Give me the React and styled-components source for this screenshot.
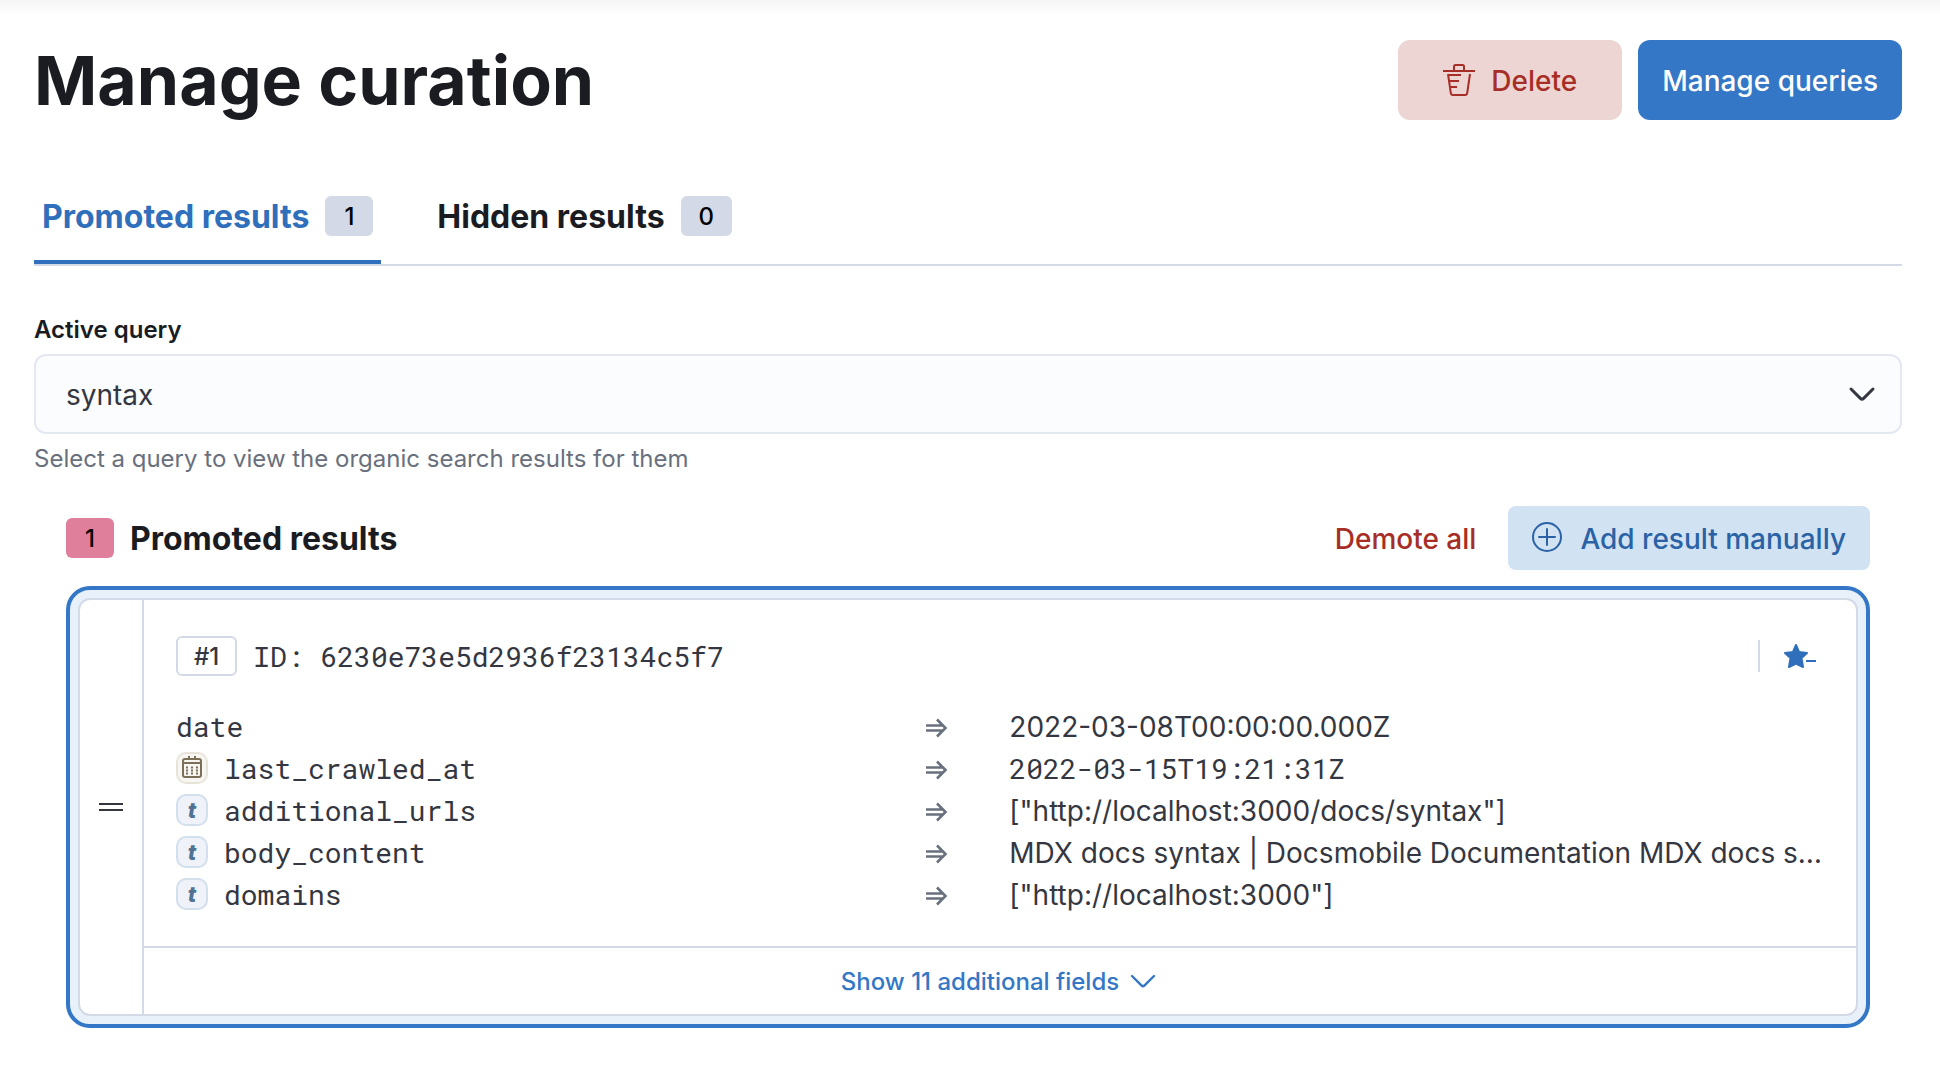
import React from "react";
import styled, { createGlobalStyle, css } from "styled-components";

const sans = `Inter, "Liberation Sans", sans-serif`;
const mono = `"Roboto Mono", "DejaVu Sans Mono", monospace`;

const color = {
  title: "#1a1c21",
  text: "#343741",
  subdued: "#69707d",
  primary: "#3377c6",
  primaryText: "#2f6fbb",
  border: "#d3d9e6",
  danger: "#a72e26",
};

const GlobalStyle = createGlobalStyle`
  *, *::before, *::after { box-sizing: border-box; }
  body {
    margin: 0;
    background: #fff;
    color: ${color.text};
    font-family: ${sans};
    font-size: 28px;
    line-height: 42px;
  }
  button, select { font-family: inherit; }
`;

const Page = styled.main`
  min-height: 100vh;
  padding: 40px 38px 44px 34px;
  background: linear-gradient(#f5f5f5, #fff) top / 100% 16px no-repeat;
`;

const Header = styled.header`
  display: flex;
  align-items: center;
  justify-content: space-between;
  gap: 16px;
`;

const PageTitle = styled.h1`
  margin: 0;
  color: ${color.title};
  font-size: 68px;
  font-weight: 700;
  line-height: 80px;
`;

const Actions = styled.div`
  display: flex;
  align-items: center;
  gap: ${(p) => p.$gap || 16}px;
`;

const fills = {
  danger: css`background: #edd5d3; color: ${color.danger};`,
  primary: css`background: ${color.primary}; color: #fff;`,
  soft: css`background: #d1e2f2; color: #2a62a5;`,
};

const Label = styled.span`
  padding-top: 2px;
`;

const Button = styled.button`
  display: flex;
  align-items: center;
  justify-content: center;
  gap: 16px;
  height: ${(p) => (p.$small ? 64 : 80)}px;
  min-width: ${(p) => (p.$small ? 0 : 224)}px;
  padding: 0 24px;
  border: 0;
  border-radius: ${(p) => (p.$small ? 8 : 12)}px;
  font-size: 28px;
  font-weight: 500;
  line-height: 42px;
  cursor: pointer;
  ${(p) => fills[p.$fill]}
`;

const TextButton = styled.button`
  padding: 2px 0 0;
  border: 0;
  background: none;
  color: ${color.danger};
  font-size: 28px;
  font-weight: 500;
  line-height: 42px;
  cursor: pointer;
`;

const Tabs = styled.div`
  display: flex;
  gap: 48px;
  margin-top: 48px;
  border-bottom: 2px solid ${color.border};
`;

const Tab = styled.button`
  display: flex;
  align-items: center;
  gap: 16px;
  height: 96px;
  padding: 4px 8px 0;
  border: 0;
  border-bottom: 4px solid ${(p) => (p.$active ? color.primaryText : "transparent")};
  background: none;
  color: ${(p) => (p.$active ? color.primaryText : color.title)};
  font-size: 32px;
  font-weight: 700;
  line-height: 48px;
  cursor: pointer;
`;

const Badge = styled.span`
  min-width: 48px;
  height: 40px;
  padding: 0 ${(p) => (p.$outlined ? 16 : 18)}px;
  border: ${(p) => (p.$outlined ? `2px solid ${color.border}` : "0")};
  border-radius: 6px;
  background: ${(p) => p.$bg || "#fff"};
  color: ${(p) => (p.$outlined ? color.text : "#000")};
  font-size: 24px;
  font-weight: 500;
  line-height: ${(p) => (p.$outlined ? 38 : 42)}px;
  text-align: center;
`;

const Field = styled.div`
  display: flex;
  flex-direction: column;
  margin-top: 48px;
`;

const FieldLabel = styled.label`
  margin-bottom: 8px;
  color: ${color.title};
  font-size: 24px;
  font-weight: 600;
  line-height: 32px;
`;

const SelectWrap = styled.div`
  display: grid;
  align-items: center;
  > * { grid-area: 1 / 1; }
  > svg { justify-self: end; margin-right: 24px; pointer-events: none; }
`;

const Select = styled.select`
  width: 100%;
  height: 80px;
  padding: 2px 30px 0;
  border: 2px solid #e4e8f1;
  border-radius: 12px;
  background: #fbfcfe;
  color: ${color.text};
  font-size: 28px;
  appearance: none;
`;

const Help = styled.p`
  margin: 8px 0 0;
  color: ${color.subdued};
  font-size: 24px;
  line-height: 34px;
`;

const Section = styled.section`
  margin: 30px 32px 0;
`;

const SectionHeader = styled.div`
  display: flex;
  align-items: center;
  justify-content: space-between;
`;

const SectionTitle = styled.h2`
  margin: 0;
  padding-top: 2px;
  color: ${color.title};
  font-size: 32px;
  font-weight: 700;
  line-height: 48px;
`;

const DropZone = styled.div`
  margin-top: 16px;
  padding: 8px;
  border: 4px solid ${color.primary};
  border-radius: 24px;
  background: #e8f0f9;
`;

const Card = styled.article`
  display: grid;
  grid-template-columns: 64px minmax(0, 1fr);
  border: 2px solid ${color.border};
  border-radius: 12px;
  background: #fff;
  overflow: hidden;
`;

const Handle = styled.button`
  display: flex;
  align-items: center;
  justify-content: center;
  padding: 0;
  border: 0;
  border-right: 2px solid ${color.border};
  background: none;
  color: ${color.text};
  cursor: grab;
`;

const CardBody = styled.div`
  padding: 32px;
`;

const CardHeader = styled.div`
  display: flex;
  align-items: center;
  gap: 16px;
  height: 48px;
  margin-bottom: 24px;
`;

const DocumentId = styled.span`
  flex: 1;
  padding-top: 2px;
  font-family: ${mono};
`;

const StarButton = styled.button`
  display: flex;
  height: 32px;
  padding: 0 8px 0 24px;
  border: 0;
  border-left: 2px solid ${color.border};
  background: none;
  color: ${color.primaryText};
  cursor: pointer;
`;

const Fields = styled.dl`
  margin: 0;
`;

const FieldRow = styled.div`
  display: grid;
  grid-template-columns: minmax(0, 11fr) 24px minmax(0, 13fr);
  column-gap: 60px;
  align-items: center;
  height: 42px;
`;

const FieldName = styled.dt`
  display: flex;
  align-items: center;
  gap: 16px;
  font-family: ${mono};
`;

const FieldValue = styled.dd`
  margin: 0;
  padding-top: 2px;
  overflow: hidden;
  font-family: ${(p) => (p.$mono ? mono : sans)};
  text-overflow: ellipsis;
  white-space: nowrap;
`;

const Token = styled.span`
  display: flex;
  align-items: center;
  justify-content: center;
  width: 32px;
  height: 32px;
  border: 2px solid ${(p) => (p.$kind === "date" ? "#e8e4da" : "#d2dfec")};
  border-radius: 10px;
  background: ${(p) => (p.$kind === "date" ? "#f8f6f2" : "#eff3f9")};
  color: ${(p) => (p.$kind === "date" ? "#7c6f57" : "#527294")};
  font-family: ${sans};
  font-size: 22px;
  font-style: italic;
  font-weight: 800;
  line-height: 28px;
`;

const ShowMore = styled.button`
  display: flex;
  align-items: center;
  justify-content: center;
  gap: 8px;
  width: 100%;
  height: 68px;
  padding: 0;
  border: 0;
  border-top: 2px solid ${color.border};
  background: none;
  color: ${color.primary};
  font-size: 24px;
  font-weight: 500;
  line-height: 32px;
  cursor: pointer;
`;

const Icon = ({ size = 32, box = 16, children }) => (
  <svg width={size} height={size} viewBox={`0 0 ${box} ${box}`} fill="none" aria-hidden="true">
    {children}
  </svg>
);

const ChevronIcon = ({ weight = 1, tint = "currentColor" }) => (
  <Icon>
    <path d="M2.5 5.5 7.2 10.2a1.15 1.15 0 0 0 1.6 0L13.5 5.5" stroke={tint} strokeWidth={weight} strokeLinecap="round" />
  </Icon>
);

const TrashIcon = () => (
  <Icon box={32}>
    <path
      d="M0 7h32M11 7V2.5Q11 1 12.5 1h7Q21 1 21 2.5V7M5 10l2.8 19q.2 2 2.2 2h12q2 0 2.2-2L27 10M5 11h13M6 17h10M7 23h7"
      stroke="currentColor"
      strokeWidth="2"
    />
  </Icon>
);

const PlusCircleIcon = () => (
  <Icon>
    <circle cx="7.5" cy="7.5" r="7" stroke="currentColor" />
    <path d="M7.5 3.5v8M3.5 7.5h8" stroke="currentColor" strokeLinecap="round" />
  </Icon>
);

const GrabIcon = () => (
  <Icon>
    <path d="M2 6.5h12M2 9.5h12" stroke="currentColor" />
  </Icon>
);

const StarMinusIcon = () => (
  <Icon box={32}>
    <path
      d="M12 5l3 7 8 1-5.5 5 1.5 9-7-3.500L5 27l1.500-9L1 13l8-1z"
      fill="currentColor"
      stroke="currentColor"
      strokeWidth="2"
      strokeLinejoin="round"
    />
    <path d="M20 19h12v4H20z" fill="#fff" />
    <path d="M22 21h10" stroke="currentColor" strokeWidth="2" />
  </Icon>
);

const ArrowIcon = () => (
  <Icon size={24} box={24}>
    <path d="M1 11.5h17M1 16.5h17M12 5.500l8.500 8.500-8.500 8.500" stroke={color.subdued} strokeWidth="2.6" />
  </Icon>
);

const CalendarIcon = () => (
  <Icon size={24} box={24}>
    <rect x="3" y="3" width="18" height="18" rx="2" stroke="currentColor" strokeWidth="2" />
    <path d="M3 7h18M9 0v3M15 0v3" stroke="currentColor" strokeWidth="2" />
    <path d="M6 11.5h12M6 14.5h12M6 17.5h12" stroke="currentColor" strokeWidth="2" strokeDasharray="2 3" />
  </Icon>
);

const fields = [
  { name: "date", value: "2022-03-08T00:00:00.000Z" },
  { name: "last_crawled_at", value: "2022-03-15T19:21:31Z", kind: "date" },
  { name: "additional_urls", value: '["http://localhost:3000/docs/syntax"]', kind: "string" },
  {
    name: "body_content",
    value: "MDX docs syntax | Docsmobile Documentation MDX docs s…",
    kind: "string",
  },
  { name: "domains", value: '["http://localhost:3000"]', kind: "string" },
];

export default function App() {
  return (
    <>
      <GlobalStyle />
      <Page>
        <Header>
          <PageTitle>Manage curation</PageTitle>
          <Actions>
            <Button $fill="danger"><TrashIcon /><Label>Delete</Label></Button>
            <Button $fill="primary"><Label>Manage queries</Label></Button>
          </Actions>
        </Header>

        <Tabs role="tablist">
          <Tab role="tab" aria-selected="true" $active>
            <Label>Promoted results</Label><Badge $bg={color.border}>1</Badge>
          </Tab>
          <Tab role="tab" aria-selected="false">
            <Label>Hidden results</Label><Badge $bg={color.border}>0</Badge>
          </Tab>
        </Tabs>

        <Field>
          <FieldLabel htmlFor="active-query">Active query</FieldLabel>
          <SelectWrap>
            <Select id="active-query" aria-describedby="active-query-help">
              <option>syntax</option>
            </Select>
            <ChevronIcon weight={1.5} tint={color.text} />
          </SelectWrap>
          <Help id="active-query-help">Select a query to view the organic search results for them</Help>
        </Field>

        <Section>
          <SectionHeader>
            <Actions>
              <Badge $bg="#df7f9c">1</Badge>
              <SectionTitle>Promoted results</SectionTitle>
            </Actions>
            <Actions $gap={32}>
              <TextButton>Demote all</TextButton>
              <Button $fill="soft" $small><PlusCircleIcon /><Label>Add result manually</Label></Button>
            </Actions>
          </SectionHeader>

          <DropZone>
            <Card>
              <Handle aria-label="Reorder result"><GrabIcon /></Handle>
              <div>
                <CardBody>
                  <CardHeader>
                    <Badge $outlined>#1</Badge>
                    <DocumentId>ID: 6230e73e5d2936f23134c5f7</DocumentId>
                    <StarButton aria-label="Demote this result"><StarMinusIcon /></StarButton>
                  </CardHeader>
                  <Fields>
                    {fields.map((f) => (
                      <FieldRow key={f.name}>
                        <FieldName>
                          {f.kind && (
                            <Token $kind={f.kind}>
                              {f.kind === "date" ? <CalendarIcon /> : "t"}
                            </Token>
                          )}
                          <Label>{f.name}</Label>
                        </FieldName>
                        <ArrowIcon />
                        <FieldValue $mono={f.kind === "date"}>{f.value}</FieldValue>
                      </FieldRow>
                    ))}
                  </Fields>
                </CardBody>
                <ShowMore><Label>Show 11 additional fields</Label><ChevronIcon weight={1.2} /></ShowMore>
              </div>
            </Card>
          </DropZone>
        </Section>
      </Page>
    </>
  );
}
